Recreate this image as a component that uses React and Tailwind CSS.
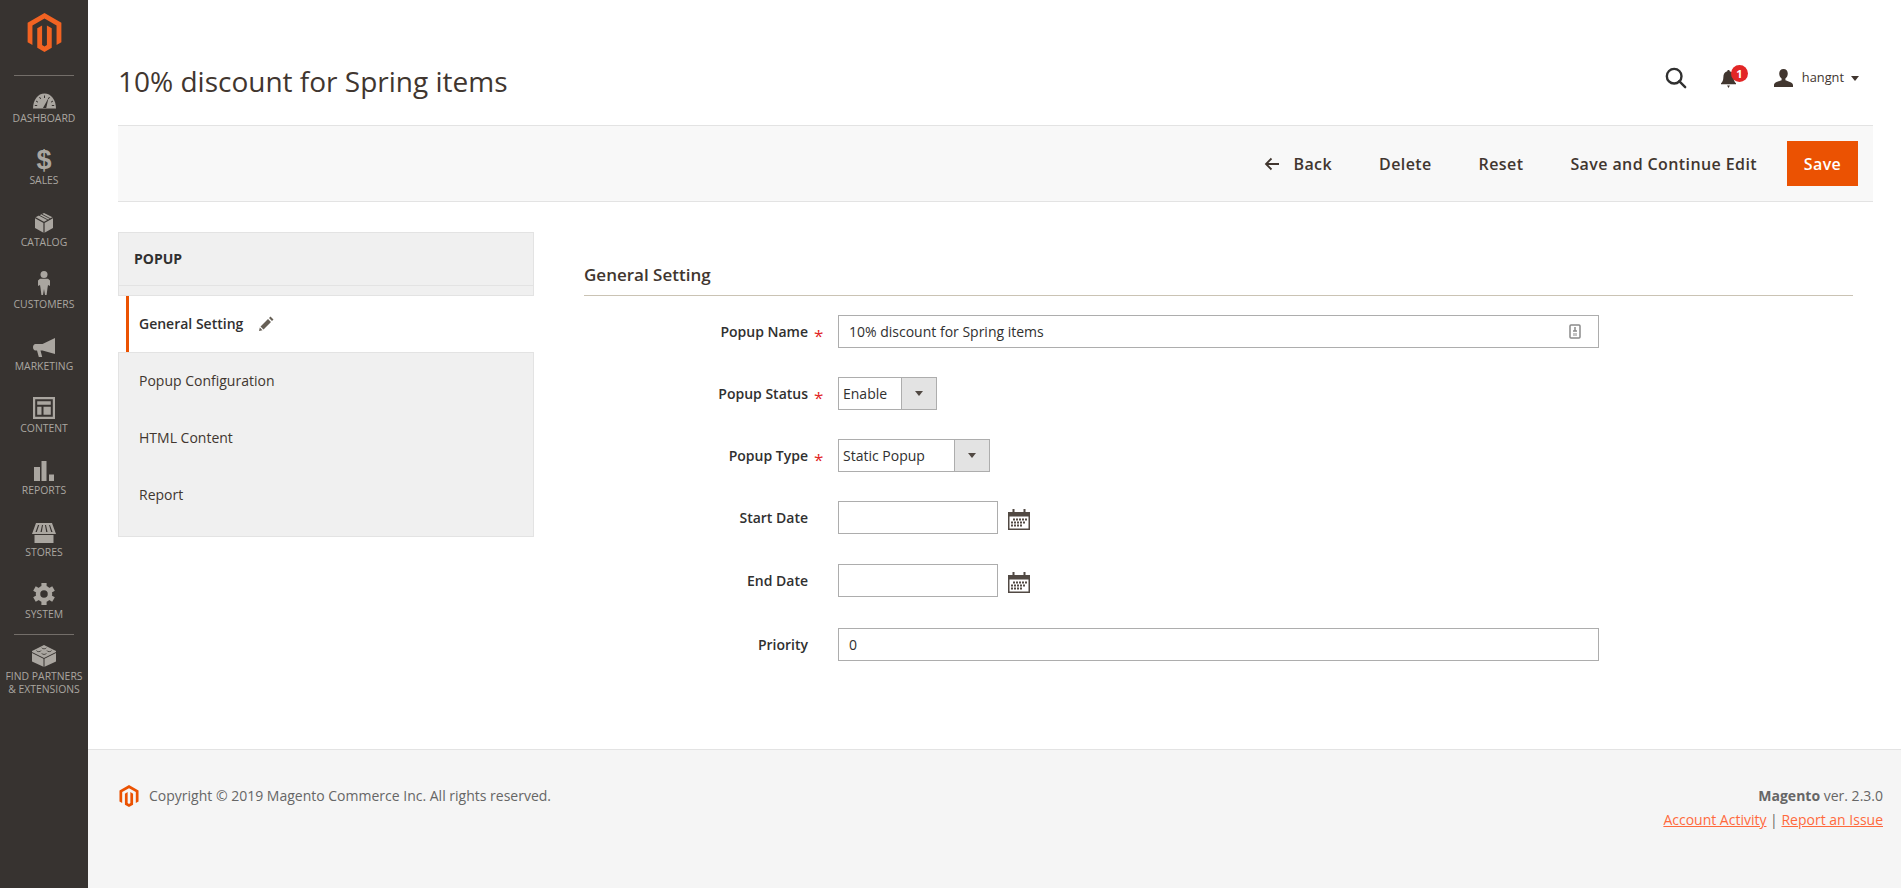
import { SiMagento } from 'react-icons/si'

const FONT = { fontFamily: '"Open Sans", sans-serif' }

const GaugeIcon = () => (
  <svg width="23" height="16" viewBox="0 0 23 16">
    <path d="M0 16C0 6.500 5 .5 11.500 .5S23 6.500 23 16z" fill="#aaa6a0" />
    <path d="M11.500 2.500v2.500M6.500 4l1.200 2M3 8l2 1.200M1.800 12.500h2.400M16.500 4l-1.200 2M20 8l-2 1.200M21.200 12.500h-2.400" stroke="#373330" strokeWidth="1" />
    <path d="M9.700 15.500L15.500 5l-2.500 11z" fill="#373330" />
    <path d="M0 15h23v1H0z" fill="#736e69" />
  </svg>
)
const BoxIcon = () => (
  <svg width="18" height="20" viewBox="0 0 18 20">
    <path d="M9 0l9 4.500V15l-9 5-9-5V4.500z" fill="#aaa6a0" />
    <path d="M0 4.500L9 9.500l9-5M9 9.500V20" fill="none" stroke="#373330" strokeWidth="1.200" />
    <path d="M4 2.200l9 4.800M6.500 1l9 4.800" fill="none" stroke="#373330" strokeWidth=".9" />
  </svg>
)
const PersonIcon = () => (
  <svg width="12" height="24" viewBox="0 0 12 24" fill="#aaa6a0">
    <circle cx="6" cy="3.500" r="3.500" />
    <path d="M2 7.800h8l2 1.700v5.500l-2-.9-.5 2.900-.9 7H7L6 18l-1 6H3.400l-.9-7-.5-2.900-2 .9V9.500z" />
  </svg>
)
const MegaphoneIcon = () => (
  <svg width="22" height="19" viewBox="0 0 22 19" fill="#aaa6a0">
    <path d="M22 0v16L9.500 12.500H7.500L9.200 19H5.800L4 12.500H2.500C1 12.500 0 11 0 9.300S1 6 2.500 6H9.500z" />
  </svg>
)
const LayoutIcon = () => (
  <svg width="22" height="22" viewBox="0 0 22 22" fill="#aaa6a0">
    <path fillRule="evenodd" d="M0 0h22v22H0zM2.200 2.200v17.600h17.600V2.200zM4.200 4.200h13.600v3.600H4.200zM4.200 9.800h4.300v8H4.200zM10.500 9.800h7.300v8h-7.300z" />
  </svg>
)
const BarsIcon = () => (
  <svg width="20" height="20" viewBox="0 0 20 20" fill="#aaa6a0">
    <path d="M0 6h6v14H0zM7.500 0h5v20h-5zM15 13.500h5V20h-5z" />
  </svg>
)
const StoreIcon = () => (
  <svg width="24" height="20" viewBox="0 0 24 20" fill="#aaa6a0">
    <path fillRule="evenodd" d="M4 0h16l4 11H0zM6 2L3.500 9h1.300l2.400-7zM10 2L8.500 9h1.300L11 2zM13 2l1.200 7h1.300L14 2zM17 2l2.200 7h1.300L18 2z" />
    <path d="M2.500 12h19v8h-19z" />
  </svg>
)
const GearIcon = () => (
  <svg width="22" height="22" viewBox="-11 -11 22 22" fill="#aaa6a0">
    <circle r="6" fill="none" stroke="#aaa6a0" strokeWidth="4.500" />
    {[0, 60, 120, 180, 240, 300].map(a => (
      <rect key={a} x="-2.600" y="-11" width="5.200" height="4" transform={`rotate(${a})`} />
    ))}
  </svg>
)
const BrickIcon = () => (
  <svg width="24" height="22" viewBox="0 0 24 22">
    <path d="M12 0l12 6v10.500L12 22 0 16.500V6z" fill="#aaa6a0" />
    <path d="M0 7.500L12 13.500l12-6M12 13.500V22" fill="none" stroke="#373330" strokeWidth="1" />
    <path d="M4.500 5.500c0 1.500 4.500 1.500 4.500 0M9.800 2.700c0 1.500 4.500 1.500 4.500 0M9.800 8.300c0 1.500 4.500 1.500 4.500 0M15 5.500c0 1.500 4.500 1.500 4.500 0" fill="none" stroke="#373330" strokeWidth=".8" />
  </svg>
)

const NAV_ITEMS = [
  { label: 'Dashboard', icon: <GaugeIcon /> },
  { label: 'Sales', icon: <span className="text-[27px] leading-[22px] font-bold" style={{ fontFamily: '"Liberation Sans", sans-serif' }}>$</span> },
  { label: 'Catalog', icon: <BoxIcon /> },
  { label: 'Customers', icon: <PersonIcon /> },
  { label: 'Marketing', icon: <MegaphoneIcon /> },
  { label: 'Content', icon: <LayoutIcon /> },
  { label: 'Reports', icon: <BarsIcon /> },
  { label: 'Stores', icon: <StoreIcon /> },
  { label: 'System', icon: <GearIcon /> },
]

function NavItem({ label, icon }) {
  return (
    <div className="h-[62px] flex flex-col items-center justify-end pb-[13px] text-[#aaa6a0]">
      <div className="flex justify-center mb-[2px]">{icon}</div>
      <span className="text-[10.400px] leading-[14px] uppercase">{label}</span>
    </div>
  )
}

const CalendarIcon = () => (
  <svg width="22" height="21" viewBox="0 0 22 21" className="ml-[10px] mt-[3px]">
    <path d="M0 3h22v18H0z" fill="#514943" />
    <path d="M1.500 7.500h19v12h-19z" fill="#fff" />
    <path d="M4.500 0h2v5h-2zM15.500 0h2v5h-2z" fill="#514943" />
    <path d="M5 9.500h2v2H5zM8 9.500h2v2H8zM11 9.500h2v2h-2zM14 9.500h2v2h-2zM17 9.500h2v2h-2zM3 12.500h2v2H3zM6 12.500h2v2H6zM9 12.500h2v2H9zM12 12.500h2v2h-2zM15 12.500h2v2h-2zM3 15.500h2v2H3zM6 15.500h2v2H6zM9 15.500h2v2H9zM12 15.500h2v2h-2z" fill="#514943" />
  </svg>
)

function Row({ label, required, children, className = 'mb-[29px]' }) {
  return (
    <div className={`flex items-center h-[33px] ${className}`}>
      <label className="w-[224px] text-right text-[14px] font-semibold text-[#303030] shrink-0">{label}</label>
      <span className="w-[30px] pl-[6px] pt-[7px] shrink-0 text-[#e22626] text-[17px] leading-none">{required ? '*' : ''}</span>
      {children}
    </div>
  )
}

function Select({ value, width, arrow }) {
  return (
    <div className="flex h-[33px] border border-[#adadad] text-[14px] text-[#303030]" style={{ width }}>
      <span className="flex-1 pl-[4px] leading-[31px]">{value}</span>
      <span className="flex items-center justify-center border-l border-[#adadad] bg-[#e3e3e3]" style={{ width: arrow }}>
        <span className="w-0 h-0 border-x-[4.500px] border-x-transparent border-t-[5px] border-t-[#514943]" />
      </span>
    </div>
  )
}

export default function App() {
  return (
    <div className="flex min-h-[888px] bg-white text-[#303030]" style={FONT}>
      {/* Menu rail */}
      <aside className="w-[88px] shrink-0 bg-[#373330]">
        <div className="h-[75px] flex justify-center pt-[13px]">
          <SiMagento className="text-[#f26322]" size={39} />
        </div>
        <div className="mx-[14px] border-t border-[#736e69]" />
        {NAV_ITEMS.map(item => <NavItem key={item.label} {...item} />)}
        <div className="mx-[14px] border-t border-[#736e69]" />
        <div className="flex flex-col items-center pt-[10px] text-[#aaa6a0]">
          <BrickIcon />
          <span className="mt-[3px] text-[10.400px] leading-[13px] uppercase text-center whitespace-nowrap">Find Partners<br />& Extensions</span>
        </div>
      </aside>

      <main className="flex-1 flex flex-col min-w-0">
        {/* Title and user bar */}
        <header className="h-[125px] pl-[30px] pr-[42px] flex justify-between items-start pt-[63px]">
          <h1 className="text-[28px] leading-[36px] font-normal text-[#41362f]">10% discount for Spring items</h1>
          <div className="flex items-center h-[24px] mt-[3px]">
            <svg width="22" height="22" viewBox="0 0 24 24" fill="none" stroke="#303030" strokeWidth="2.600">
              <circle cx="10" cy="10" r="8" />
              <path d="M15.500 15.500L22 22" strokeLinecap="round" />
            </svg>
            <div className="relative ml-[34px] w-[16px] h-[20px]">
              <svg width="15" height="18" viewBox="0 0 16 19" fill="#41362f" className="mt-[2px]">
                <path d="M8 0c.8 0 1.300.6 1.300 1.300C12 2 13.500 4.500 13.500 7.500c0 3 .8 5 2.500 6.500v1H0v-1c1.700-1.500 2.500-3.500 2.500-6.500 0-3 1.500-5.500 4.200-6.200C6.700.6 7.200 0 8 0zM6.500 16.500h3L8 19z" />
              </svg>
              <span className="absolute -top-[3px] left-[10px] w-[17px] h-[17px] rounded-full bg-[#e22626] text-white text-[11px] font-bold leading-[17px] text-center">1</span>
            </div>
            <svg width="19" height="18" viewBox="0 0 20 20" fill="#41362f" className="ml-[37px]" preserveAspectRatio="none">
              <path d="M10 0c2.800 0 4.500 2 4.500 5 0 2.500-1 4.500-2.500 5.500v2c2 1 8 2 8 5.500v2H0v-2c0-3.500 6-4.500 8-5.500v-2C6.500 9.500 5.500 7.500 5.500 5c0-3 1.700-5 4.500-5z" />
            </svg>
            <span className="ml-[9px] text-[12.800px] text-[#41362f]">hangnt</span>
            <span className="ml-[7px] w-0 h-0 border-x-[4px] border-x-transparent border-t-[5px] border-t-[#41362f]" />
          </div>
        </header>

        {/* Page actions */}
        <div className="h-[77px] ml-[30px] mr-[28px] bg-[#f8f8f8] border-y border-[#e3e3e3] flex items-center justify-end pr-[15px] text-[16px] font-semibold tracking-[0.4px] text-[#41362f]">
          <svg width="16" height="14" viewBox="0 0 16 14" fill="none" stroke="#41362f" strokeWidth="1.800" className="mr-[13px]">
            <path d="M15 7H2M7.500 1.500L2 7l5.500 5.500" />
          </svg>
          <span>Back</span>
          <span className="ml-[47px]">Delete</span>
          <span className="ml-[47px]">Reset</span>
          <span className="ml-[47px]">Save and Continue Edit</span>
          <span className="ml-[30px] w-[71px] h-[45px] bg-[#eb5202] text-white flex items-center justify-center">Save</span>
        </div>

        {/* Tabs and form */}
        <div className="flex-1 flex pl-[30px] pr-[48px] pt-[30px]">
          <div className="w-[416px] shrink-0 text-[14px]">
            <div className="h-[64px] bg-[#f0f0f0] border border-[#e3e3e3] text-[#303030]">
              <div className="h-[53px] border-b border-[#e3e3e3] pl-[15px] pb-[2px] flex items-center font-bold">POPUP</div>
            </div>
            <div className="h-[56px] pl-[8px] flex">
              <div className="flex-1 border-l-[3px] border-[#eb5202] pl-[10px] pb-[1px] flex items-center">
                <span className="font-semibold">General Setting</span>
                <svg width="15" height="15" viewBox="0 0 15 15" fill="#676056" className="ml-[16px]">
                  <path d="M11.500.5L14.500 3.500 13 5 10 2zM9 3l3 3-7.500 7.500-3-3zM.8 11.500l2.700 2.700-3.500.8z" />
                </svg>
              </div>
            </div>
            <div className="h-[185px] bg-[#f0f0f0] border border-[#e3e3e3] text-[#41362f]">
              <div className="h-[57px] pl-[20px] pb-[3px] flex items-center">Popup Configuration</div>
              <div className="h-[57px] pl-[20px] pb-[3px] flex items-center">HTML Content</div>
              <div className="h-[57px] pl-[20px] pb-[3px] flex items-center">Report</div>
            </div>
          </div>

          <div className="flex-1 ml-[50px] min-w-0">
            <div className="h-[65px] mt-[-1px] flex items-end pb-[8px] border-b border-[#cac3b4] text-[17px] font-semibold text-[#41362f]">
              General Setting
            </div>
            <div className="pt-[19px]">
              <Row label="Popup Name" required>
                <div className="w-[761px] h-[33px] border border-[#adadad] pl-[10px] pr-[17px] flex items-center justify-between text-[14px]">
                  <span>10% discount for Spring items</span>
                  <svg width="12" height="15" viewBox="0 0 12 15">
                    <rect x="1" y="1" width="10" height="13" rx="1" fill="none" stroke="#8a8a8a" strokeWidth="1.500" />
                    <path d="M6 3v4M4 7h4" stroke="#8a8a8a" strokeWidth="1.500" />
                    <path d="M4 9h4v3H4z" fill="#c4c4c4" />
                  </svg>
                </div>
              </Row>
              <Row label="Popup Status" required>
                <Select value="Enable" width={99} arrow={35} />
              </Row>
              <Row label="Popup Type" required>
                <Select value="Static Popup" width={152} arrow={35} />
              </Row>
              <Row label="Start Date" className="mb-[30px]">
                <div className="w-[160px] h-[33px] border border-[#adadad]" />
                <CalendarIcon />
              </Row>
              <Row label="End Date" className="mb-[31px]">
                <div className="w-[160px] h-[33px] border border-[#adadad]" />
                <CalendarIcon />
              </Row>
              <Row label="Priority" className="">
                <div className="w-[761px] h-[33px] border border-[#adadad] pl-[10px] flex items-center text-[14px]">0</div>
              </Row>
            </div>
          </div>
        </div>

        {/* Footer */}
        <footer className="h-[139px] bg-[#f5f5f5] border-t border-[#e3e3e3] pl-[30px] pr-[18px] pt-[34px] flex justify-between text-[14px] text-[#666666]">
          <div className="flex items-center h-[22px]">
            <SiMagento className="text-[#eb5202] mt-[2px]" size={22} />
            <span className="ml-[9px]">Copyright © 2019 Magento Commerce Inc. All rights reserved.</span>
          </div>
          <div className="text-right leading-[24px]">
            <div><b>Magento</b> ver. 2.3.0</div>
            <div className="text-[#ff6a3d]">
              <span className="underline">Account Activity</span>
              <span className="text-[#666666]"> | </span>
              <span className="underline">Report an Issue</span>
            </div>
          </div>
        </footer>
      </main>
    </div>
  )
}
